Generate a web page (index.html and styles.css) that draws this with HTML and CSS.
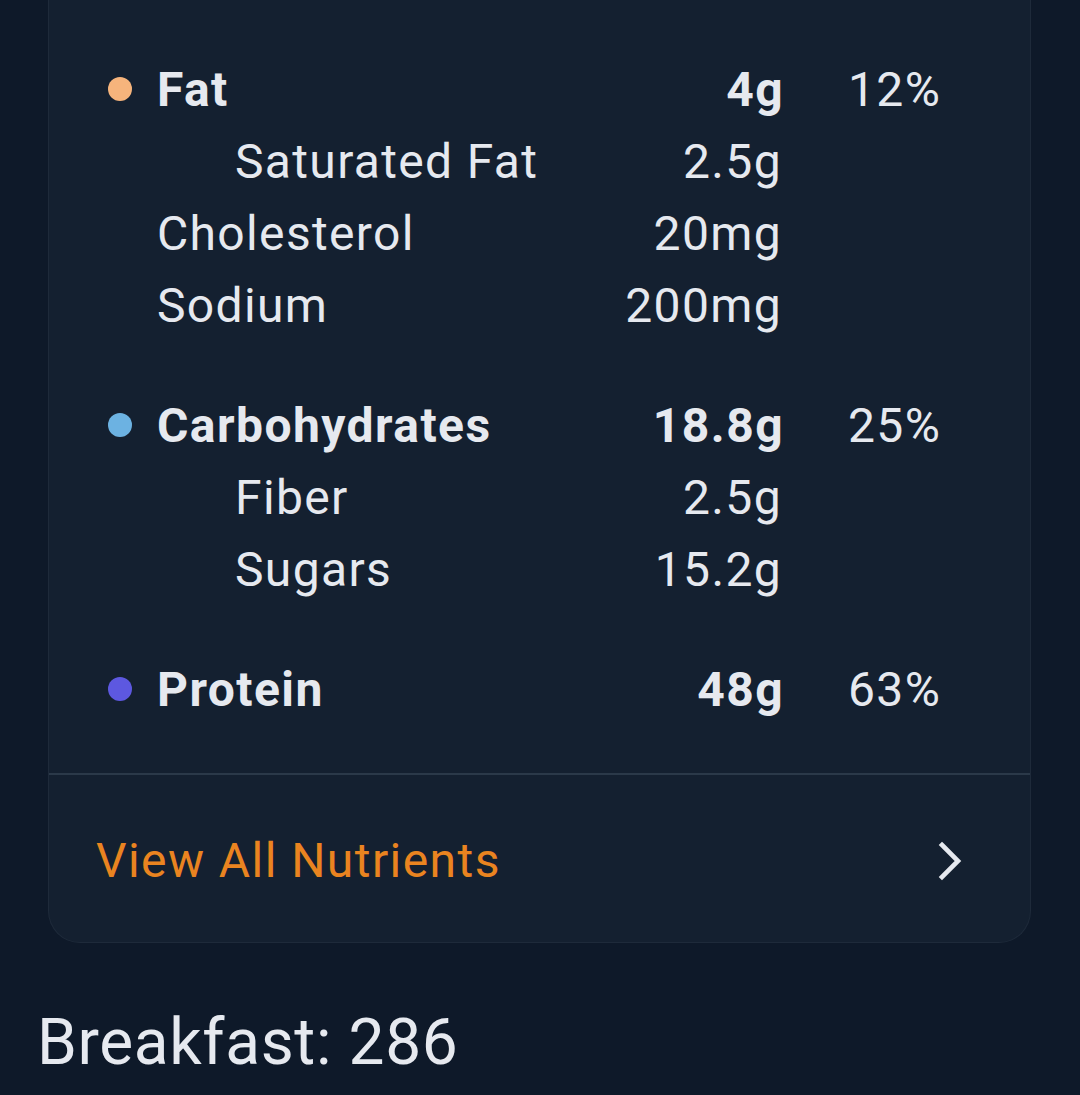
FILE: index.html
```html
<!DOCTYPE html>
<html lang="en">
<head>
    <meta charset="UTF-8">
    <meta name="viewport" content="width=device-width, initial-scale=1.0">
    <title>Nutrition Facts</title>
    <link rel="stylesheet" href="styles.css">
</head>
<body>
    <div class="card">
        <div class="nutrients">
            <div class="group">
                <div class="row main">
                    <span class="dot fat"></span>
                    <span class="name">Fat</span>
                    <span class="amount">4g</span>
                    <span class="percent">12%</span>
                </div>
                <div class="row sub">
                    <span class="dot"></span>
                    <span class="name">Saturated Fat</span>
                    <span class="amount">2.5g</span>
                    <span class="percent"></span>
                </div>
                <div class="row">
                    <span class="dot"></span>
                    <span class="name">Cholesterol</span>
                    <span class="amount">20mg</span>
                    <span class="percent"></span>
                </div>
                <div class="row">
                    <span class="dot"></span>
                    <span class="name">Sodium</span>
                    <span class="amount">200mg</span>
                    <span class="percent"></span>
                </div>
            </div>
            <div class="group">
                <div class="row main">
                    <span class="dot carbs"></span>
                    <span class="name">Carbohydrates</span>
                    <span class="amount">18.8g</span>
                    <span class="percent">25%</span>
                </div>
                <div class="row sub">
                    <span class="dot"></span>
                    <span class="name">Fiber</span>
                    <span class="amount">2.5g</span>
                    <span class="percent"></span>
                </div>
                <div class="row sub">
                    <span class="dot"></span>
                    <span class="name">Sugars</span>
                    <span class="amount">15.2g</span>
                    <span class="percent"></span>
                </div>
            </div>
            <div class="group">
                <div class="row main">
                    <span class="dot protein"></span>
                    <span class="name">Protein</span>
                    <span class="amount">48g</span>
                    <span class="percent">63%</span>
                </div>
            </div>
        </div>
        <a class="view-all" href="#">
            <span>View All Nutrients</span>
            <svg class="chevron" width="28" height="40" viewBox="0 0 28 40">
                <path d="M6 4 L22 20 L6 36" fill="none" stroke="#e6e9ef" stroke-width="4.6" stroke-linecap="square"/>
            </svg>
        </a>
    </div>
    <h2 class="meal">Breakfast: 286</h2>
</body>
</html>
```

FILE: styles.css
```css
body {
    margin: 0;
    background: #0e1929;
    font-family: Roboto, "Liberation Sans", sans-serif;
    color: #e6e9ef;
}
.card {
    margin-left: 48px;
    width: 983px;
    box-sizing: border-box;
    background: #142030;
    border: 1px solid #1e2a3a;
    border-top: none;
    border-radius: 0 0 32px 32px;
}
.nutrients {
    display: flex;
    flex-direction: column;
    gap: 48px;
    padding: 53px 66px 48px 59px;
}
.row {
    display: grid;
    grid-template-columns: 49px 1fr 202px 180px;
    align-items: center;
    height: 72px;
    font-size: 48px;
    letter-spacing: 0.028em;
}
.row.main {
    font-weight: 700;
    letter-spacing: 0.03em;
}
.row.sub .name {
    padding-left: 78px;
}
.dot {
    width: 24px;
    height: 24px;
    border-radius: 50%;
}
.dot.fat {
    background: #f6b47c;
}
.dot.carbs {
    background: #6cb2e2;
}
.dot.protein {
    background: #5d58e0;
}
.amount {
    text-align: right;
}
.row:not(.main) .amount {
    padding-right: 2px;
}
.percent {
    padding-left: 64px;
    font-weight: 400;
    letter-spacing: 0.028em;
}
.view-all {
    display: flex;
    justify-content: space-between;
    align-items: center;
    height: 169px;
    padding: 4px 66px 0 47px;
    border-top: 2px solid #2b3949;
    box-sizing: border-box;
    color: #ea8420;
    text-decoration: none;
    font-size: 48px;
    letter-spacing: 0.03em;
}
.meal {
    margin: 60px 0 0 37px;
    font-size: 64px;
    font-weight: 400;
    line-height: 80px;
    letter-spacing: 0.01em;
}
```
